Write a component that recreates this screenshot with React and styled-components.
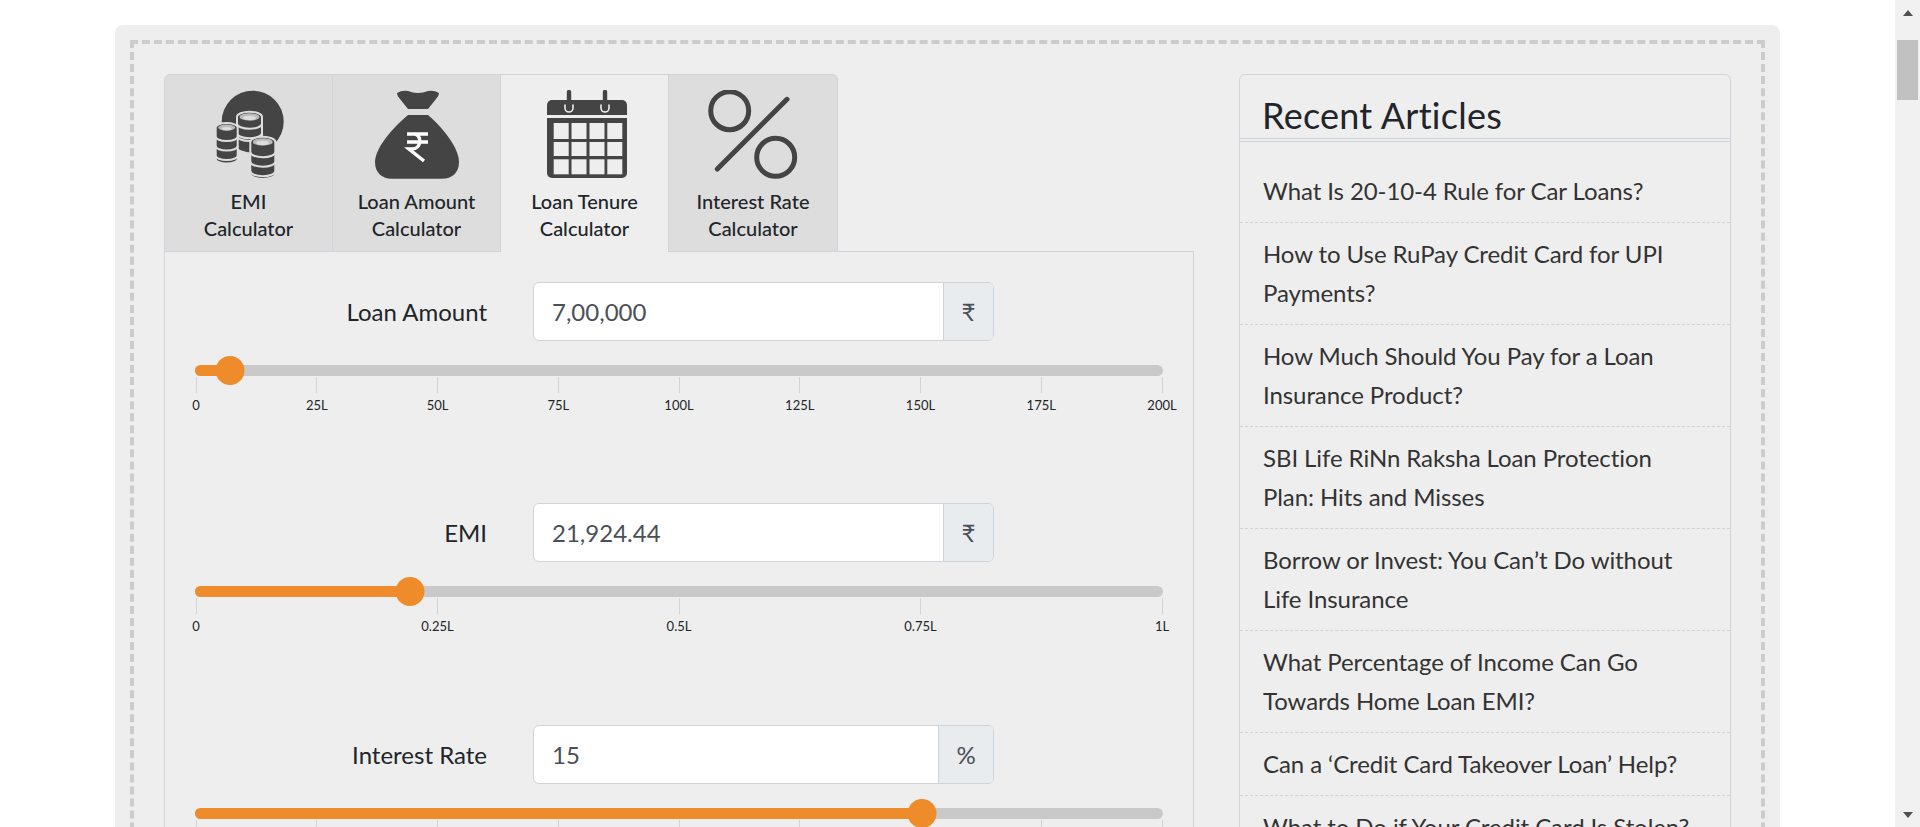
import React from "react";
import styled, { createGlobalStyle } from "styled-components";

const Color = {
  ink: "#212529",
  input: "#495057",
  line: "#ced4da",
  icon: "#444",
  orange: "#ee8c2b",
  track: "#c9c9c9",
  panel: "#eee",
  tab: "#ddd",
};

const GlobalStyle = createGlobalStyle`
  html, body {
    margin: 0;
    height: 100%;
    overflow: hidden;
    background: #fff;
  }
  body {
    color: ${Color.ink};
    font-family: Lato, "Liberation Sans", sans-serif;
  }
  * {
    box-sizing: border-box;
  }
`;

const Page = styled.div`
  display: flex;
  height: 827px;
  overflow: hidden;
`;

const Main = styled.main`
  flex: 1;
  min-width: 0;
  padding-top: 25px;
`;

const Panel = styled.section`
  background: ${Color.panel};
  border-radius: 8px 8px 0 0;
  margin: 0 auto;
  padding: 15px 15px 0;
  width: 1665px;
`;

const Dashed = styled.div`
  border: 4px dashed #ccc;
  display: grid;
  gap: 45px;
  grid-template-columns: 1030px 492px;
  padding: 30px 30px 0;
`;

const TabBar = styled.div`
  display: flex;
  height: 178px;
  width: 674px;
`;

const Tab = styled.div`
  align-items: center;
  background: ${({ $active }) => ($active ? Color.panel : Color.tab)};
  border: 1px solid ${Color.line};
  border-bottom: ${({ $active }) => ($active ? "none" : `1px solid ${Color.line}`)};
  border-left: ${({ $first }) => ($first ? `1px solid ${Color.line}` : "none")};
  border-radius: ${({ $first, $last }) =>
    $first ? "6px 0 0 0" : $last ? "0 6px 0 0" : "0"};
  display: flex;
  flex: ${({ $first, $last }) => ($last ? "1" : $first ? "0 0 169px" : "0 0 168px")};
  flex-direction: column;
  font-size: 20px;
  font-weight: 500;
  line-height: 27px;
  padding-top: 15px;
  text-align: center;
  z-index: ${({ $active }) => ($active ? 1 : 0)};

  svg {
    display: block;
    height: 90px;
    margin-bottom: 8px;
    width: 90px;
  }
`;

const TabBody = styled.div`
  border: 1px solid ${Color.line};
  margin-top: -1px;
  padding: 30px 30px 0;
`;

const Field = styled.div`
  height: 221.4px;
`;

const FieldRow = styled.div`
  align-items: center;
  display: grid;
  gap: 46px;
  grid-template-columns: 292px 461px;
`;

const FieldLabel = styled.label`
  font-size: 24px;
  text-align: right;
`;

const InputGroup = styled.div`
  background: #fff;
  border: 1px solid ${Color.line};
  border-radius: 6px;
  display: flex;
  height: 59px;
  overflow: hidden;
`;

const Value = styled.div`
  align-items: center;
  color: ${Color.input};
  display: flex;
  flex: 1;
  font-size: 24px;
  padding-left: 18px;
`;

const Addon = styled.div`
  align-items: center;
  background: #e9ecef;
  border-left: 1px solid ${Color.line};
  color: ${Color.input};
  display: flex;
  font-size: 24px;
  justify-content: center;
  width: ${({ $narrow }) => ($narrow ? "50px" : "55px")};
`;

const Slider = styled.div`
  margin-top: 24px;
  width: 968px;
`;

const Track = styled.div`
  background: ${Color.track};
  border-radius: 6px;
  height: 11px;
  position: relative;
`;

const Fill = styled.div`
  background: ${Color.orange};
  border-radius: 6px;
  height: 100%;
`;

const Thumb = styled.div`
  background: ${Color.orange};
  border-radius: 50%;
  height: 29px;
  position: absolute;
  top: -9px;
  transform: translateX(-50%);
  width: 29px;
`;

const Scale = styled.div`
  display: flex;
  justify-content: space-between;
  margin-top: 1px;
`;

const Mark = styled.div`
  align-items: center;
  display: flex;
  flex-direction: column;
  font-size: 13px;
  line-height: 18px;
  white-space: nowrap;
  width: 2px;

  &::before {
    background: ${Color.line};
    content: "";
    flex: none;
    height: 16px;
    margin-bottom: 3px;
    width: 1px;
  }
`;

const Sidebar = styled.aside`
  align-self: start;
  border: 1px solid ${Color.line};
  border-radius: 6px 6px 0 0;
  width: 492px;
`;

const SidebarTitle = styled.h2`
  border-bottom: 4px double ${Color.line};
  font-size: 36px;
  font-weight: 400;
  height: 67px;
  letter-spacing: 0.25px;
  line-height: 42px;
  margin: 0;
  padding: 19px 0 0 22px;
`;

const ArticleList = styled.ul`
  list-style: none;
  margin: 0;
  padding: 18px 0 0;
`;

const Article = styled.li`
  border-bottom: 1px dashed ${Color.line};
  color: #333;
  font-size: 24px;
  letter-spacing: -0.08px;
  line-height: 39px;
  padding: 11px 23px 12px;
`;

const ScrollBar = styled.div`
  align-items: center;
  background: #f1f1f1;
  display: flex;
  flex: none;
  flex-direction: column;
  height: 100%;
  justify-content: space-between;
  padding: 10px 0 9px;
  width: 25px;
`;

const Arrow = styled.div`
  border-left: 5.5px solid transparent;
  border-right: 5.5px solid transparent;
  ${({ $down }) => ($down ? "border-top" : "border-bottom")}: 6px solid #505050;
  height: 0;
  width: 0;
`;

const ScrollThumb = styled.div`
  background: #c1c1c1;
  flex: none;
  height: 60px;
  margin-top: 24px;
  width: 21px;
`;

const ScrollSpacer = styled.div`
  flex: 1;
`;

const CoinStack = ({ cx, top, rx, bottom }) => {
  const ry = rx * 0.42;
  const bands = [];
  for (let y = bottom - 8; y > top + ry + 3; y -= 9.5) {
    bands.push(
      <path
        key={y}
        d={`M${cx - rx} ${y}a${rx} ${ry} 0 0 0 ${rx * 2} 0`}
        fill="none"
        stroke={Color.tab}
        strokeWidth="2"
      />,
    );
  }
  return (
    <g>
      <path
        d={`M${cx - rx} ${top + ry}V${bottom - ry}a${rx} ${ry} 0 0 0 ${rx * 2} 0V${top + ry}a${rx} ${ry} 0 0 0 ${-rx * 2} 0Z`}
        fill={Color.icon}
        stroke={Color.tab}
        strokeWidth="2"
      />
      {bands}
      <ellipse cx={cx} cy={top + ry} rx={rx - 2.5} ry={ry - 1.6} fill="#bbb" />
      <ellipse cx={cx} cy={top + ry + 1} rx={rx - 6} ry={ry - 3} fill={Color.tab} />
    </g>
  );
};

const CoinsIcon = () => (
  <svg viewBox="-4 0 90 90">
    <circle cx="44.7" cy="31.7" r="31" fill={Color.icon} />
    <CoinStack cx={41.5} top={21.7} rx={12.5} bottom={51} />
    <CoinStack cx={18.7} top={33} rx={11} bottom={73.5} />
    <CoinStack cx={54.8} top={46.7} rx={12.5} bottom={89} />
  </svg>
);

const BagIcon = () => (
  <svg viewBox="0 0 90 90">
    <path
      d="M25 3Q30 0 36 1Q46 5 56 1Q62 0 67 3Q67 6 64 9L56 19H36L28 9Q25 6 25 3Z"
      fill={Color.icon}
    />
    <path
      d="M36 25H56C66 33 87 56 87 72C87 83 80 88.7 70 88.7H20C10 88.7 3 83 3 72C3 56 26 33 36 25Z"
      fill={Color.icon}
    />
    <path
      d="M35 44H56M35 52H56M37 44H42C50 44 50 59 40 59H37L52 71"
      fill="none"
      stroke="#fff"
      strokeWidth="3.5"
    />
  </svg>
);

const CALENDAR_COLUMNS = [11.7, 29.5, 47.5, 65.3];
const CALENDAR_ROWS = [
  [33, 16],
  [52, 14],
  [69.3, 15],
];

const CalendarIcon = () => (
  <svg viewBox="-2 0 90 90">
    <path d="M5 25V15a5 5 0 0 1 5-5h70a5 5 0 0 1 5 5v10Z" fill={Color.icon} />
    <path d="M5 28H85V83a5 5 0 0 1-5 5H10a5 5 0 0 1-5-5Z" fill={Color.icon} />
    {CALENDAR_ROWS.flatMap(([y, h]) =>
      CALENDAR_COLUMNS.map((x) => (
        <rect key={`${x}-${y}`} x={x} y={y} width="15" height={h} fill={Color.panel} />
      )),
    )}
    {[27, 63].map((x) => (
      <g key={x} fill="none" strokeLinecap="round">
        <path d={`M${x - 4} 15v3a4 4 0 0 0 8 0v-3`} stroke={Color.panel} strokeWidth="1.6" />
        <path d={`M${x} 2v16`} stroke={Color.icon} strokeWidth="4.4" />
      </g>
    ))}
  </svg>
);

const PercentIcon = () => (
  <svg viewBox="0 0 90 90" fill="none" stroke={Color.icon} strokeWidth="5" strokeLinecap="round">
    <circle cx="21.7" cy="20.7" r="19" />
    <circle cx="67.7" cy="67.3" r="19" />
    <path d="M79 9.3L9.3 79" />
  </svg>
);

const TABS = [
  { title: ["EMI", "Calculator"], Icon: CoinsIcon },
  { title: ["Loan Amount", "Calculator"], Icon: BagIcon },
  { title: ["Loan Tenure", "Calculator"], Icon: CalendarIcon, active: true },
  { title: ["Interest Rate", "Calculator"], Icon: PercentIcon },
];

const FIELDS = [
  {
    label: "Loan Amount",
    value: "7,00,000",
    unit: "₹",
    percent: 3.6,
    marks: ["0", "25L", "50L", "75L", "100L", "125L", "150L", "175L", "200L"],
  },
  {
    label: "EMI",
    value: "21,924.44",
    unit: "₹",
    percent: 22.2,
    marks: ["0", "0.25L", "0.5L", "0.75L", "1L"],
  },
  {
    label: "Interest Rate",
    value: "15",
    unit: "%",
    percent: 75.1,
    marks: ["", "", "", "", "", "", "", "", ""],
  },
];

const ARTICLES = [
  "What Is 20-10-4 Rule for Car Loans?",
  "How to Use RuPay Credit Card for UPI Payments?",
  "How Much Should You Pay for a Loan Insurance Product?",
  "SBI Life RiNn Raksha Loan Protection Plan: Hits and Misses",
  "Borrow or Invest: You Can’t Do without Life Insurance",
  "What Percentage of Income Can Go Towards Home Loan EMI?",
  "Can a ‘Credit Card Takeover Loan’ Help?",
  "What to Do if Your Credit Card Is Stolen?",
];

const App = () => (
  <Page>
    <GlobalStyle />
    <Main>
      <Panel>
        <Dashed>
          <div>
            <TabBar>
              {TABS.map(({ title, Icon, active }, index) => (
                <Tab
                  key={title[0]}
                  $active={active}
                  $first={index === 0}
                  $last={index === TABS.length - 1}
                >
                  <Icon />
                  <div>{title[0]}</div>
                  <div>{title[1]}</div>
                </Tab>
              ))}
            </TabBar>
            <TabBody>
              {FIELDS.map(({ label, value, unit, percent, marks }) => (
                <Field key={label}>
                  <FieldRow>
                    <FieldLabel>{label}</FieldLabel>
                    <InputGroup>
                      <Value>{value}</Value>
                      <Addon $narrow={unit === "₹"}>{unit}</Addon>
                    </InputGroup>
                  </FieldRow>
                  <Slider>
                    <Track>
                      <Fill style={{ width: `${percent}%` }} />
                      <Thumb style={{ left: `${percent}%` }} />
                    </Track>
                    <Scale>
                      {marks.map((mark, index) => (
                        <Mark key={index}>{mark}</Mark>
                      ))}
                    </Scale>
                  </Slider>
                </Field>
              ))}
            </TabBody>
          </div>
          <Sidebar>
            <SidebarTitle>Recent Articles</SidebarTitle>
            <ArticleList>
              {ARTICLES.map((article) => (
                <Article key={article}>{article}</Article>
              ))}
            </ArticleList>
          </Sidebar>
        </Dashed>
      </Panel>
    </Main>
    <ScrollBar>
      <Arrow />
      <ScrollThumb />
      <ScrollSpacer />
      <Arrow $down />
    </ScrollBar>
  </Page>
);

export default App;
